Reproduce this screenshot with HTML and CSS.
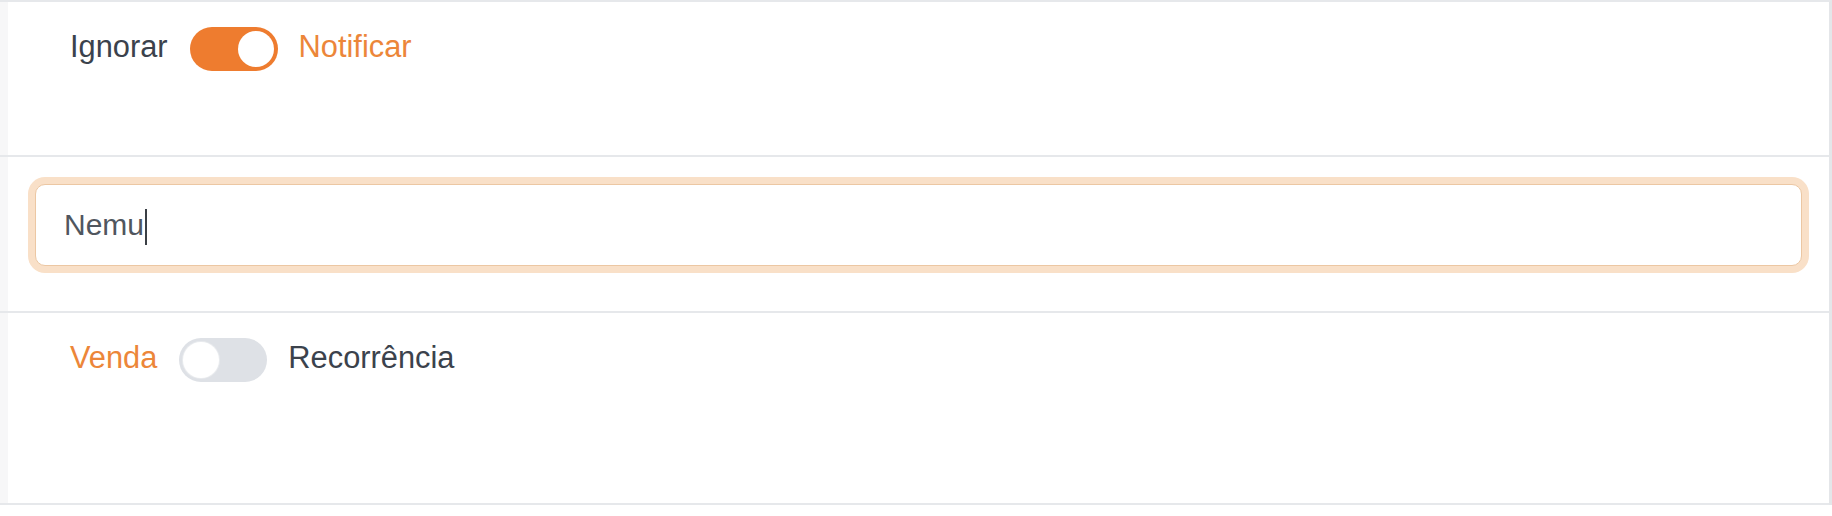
FILE: index.html
```html
<!DOCTYPE html>
<html lang="pt-BR">
<head>
<meta charset="utf-8">
<title>Configuração</title>
<link rel="stylesheet" href="styles.css">
</head>
<body>
<div class="panel">
  <div class="row row-switch row-first">
    <span class="label">Ignorar</span>
    <span class="switch switch-on" role="switch" aria-checked="true"><span class="knob"></span></span>
    <span class="label label-active">Notificar</span>
  </div>
  <div class="row row-input">
    <div class="field">
      <span class="field-text">Nemu</span><span class="caret"></span>
    </div>
  </div>
  <div class="row row-switch row-last">
    <span class="label label-active">Venda</span>
    <span class="switch" role="switch" aria-checked="false"><span class="knob"></span></span>
    <span class="label">Recorrência</span>
  </div>
</div>
</body>
</html>
```
FILE: styles.css
```css
* { box-sizing: border-box; }

html, body {
  margin: 0;
  padding: 0;
  background: #ffffff;
}

body {
  font-family: "Liberation Sans", Arial, sans-serif;
  font-size: 30.8px;
  color: #3b424c;
}

.panel {
  width: 1832px;
  background: #ffffff;
  border-top: 2px solid #e6e8eb;
  border-right: 3px solid #e4e6e9;
  box-shadow: inset 8px 0 0 #f7f7f8;
}

.row {
  border-bottom: 2px solid #e6e8eb;
}

.row-switch {
  display: flex;
  align-items: flex-start;
  padding: 22px 0 0 70px;
}

.row-first { height: 155px; }
.row-last { height: 192px; }

.label {
  line-height: 45px;
  white-space: nowrap;
}

.label-active {
  color: #ec8639;
}

.switch {
  display: flex;
  align-items: center;
  width: 88px;
  height: 44px;
  margin: 3px 21px 0 22px;
  padding: 0 4px;
  border-radius: 22px;
  background: #dee1e6;
}

.switch-on {
  background: #ee7c2f;
  justify-content: flex-end;
}

.knob {
  width: 36px;
  height: 36px;
  border-radius: 50%;
  background: #ffffff;
}

.switch:not(.switch-on) .knob {
  box-shadow: 0 0 0 1px #e9ebee;
}

.row-input {
  height: 156px;
  padding: 27px 27px 0 35px;
}

.field {
  display: flex;
  align-items: center;
  height: 82px;
  padding: 0 28px;
  border: 1px solid #ecc7a3;
  border-radius: 10px;
  background: #ffffff;
  box-shadow: 0 0 0 7px #f9e0c8;
  color: #50565e;
  font-size: 30px;
  line-height: 34px;
}

.caret {
  display: inline-block;
  width: 2px;
  height: 36px;
  margin-left: 1px;
  margin-top: 4px;
  background: #3a3f45;
}
```
